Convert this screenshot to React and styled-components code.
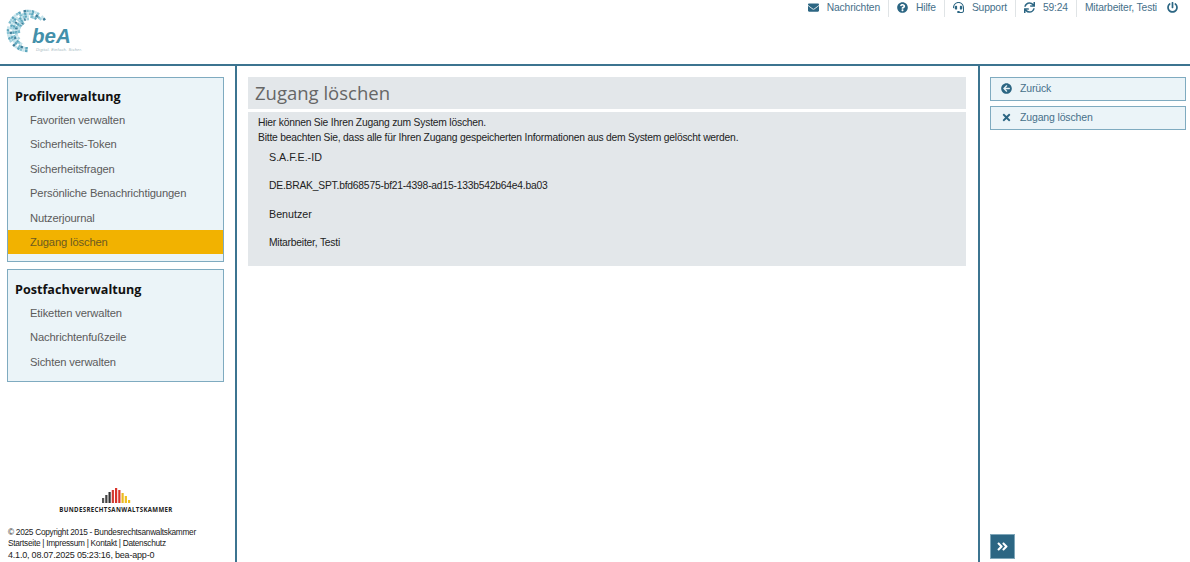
import React from 'react'
import styled, { createGlobalStyle } from 'styled-components'
import {
    FaEnvelope,
    FaQuestionCircle,
    FaHeadset,
    FaSync,
    FaPowerOff,
    FaArrowCircleLeft,
    FaTimes,
    FaAngleDoubleRight,
} from 'react-icons/fa'

const GlobalStyle = createGlobalStyle`
  html, body {
    margin: 0;
    padding: 0;
    height: 100%;
    background: #fff;
    font-family: "Liberation Sans", Arial, sans-serif;
    overflow: hidden;
  }
  #root { height: 100%; }
`

const profileLinks = [
    'Favoriten verwalten',
    'Sicherheits-Token',
    'Sicherheitsfragen',
    'Persönliche Benachrichtigungen',
    'Nutzerjournal',
    'Zugang löschen',
]
const mailboxLinks = ['Etiketten verwalten', 'Nachrichtenfußzeile', 'Sichten verwalten']

const bars = [
    { h: 5, c: '#555' },
    { h: 8, c: '#444' },
    { h: 11, c: '#333' },
    { h: 13, c: '#d23a30' },
    { h: 15, c: '#d9342b' },
    { h: 13, c: '#d9342b' },
    { h: 10, c: '#ecb920' },
    { h: 7, c: '#f0c020' },
    { h: 3, c: '#f0c020' },
]

// block ring of the logo: polar cells, thick on the left, thin towards both ends
const ringShades = ['#8cc6d6', '#5da7bd', '#c4e3eb', '#3f7f9a', '#7dbccd', '#a3d2df', '#5da7bd', '#c4e3eb']
const ringCells = []
const ringSteps = 30
for (let s = 0; s <= ringSteps; s++) {
    const t = s / ringSteps
    const deg = 36 + t * 237
    const rad = (deg * Math.PI) / 180
    const thickness = 2.5 + 9.5 * Math.sin(Math.PI * t)
    let row = 0
    for (let radius = 20; radius > 20 - thickness; radius -= 2.7) {
        row++
        // leave holes so the ring looks scattered like the original
        if ((s * 5 + row * 11) % 7 === 0) continue
        const pick = (s * 7 + row * 3) % ringShades.length
        ringCells.push({
            x: 28 + Math.cos(rad) * radius,
            y: 31 - Math.sin(rad) * radius,
            deg,
            color: ringShades[pick],
        })
    }
}

const Logo = () => (
    <LogoSvg viewBox="0 0 90 60" width="90" height="60">
        {ringCells.map((c, i) => (
            <rect
                key={i}
                x={c.x - 1.25}
                y={c.y - 1.25}
                width="2.5"
                height="2.5"
                fill={c.color}
                transform={`rotate(${-c.deg} ${c.x} ${c.y})`}
            />
        ))}
        <text x="32" y="42.5" fontFamily="'Liberation Sans', sans-serif" fontWeight="700" fontStyle="italic" fontSize="20.5" fill="#4390aa">
            beA
        </text>
        <text x="36" y="50.7" fontFamily="'Liberation Sans', sans-serif" fontStyle="italic" fontSize="4" letterSpacing="0.2" fill="#a3b8c0">
            Digital. Einfach. Sicher.
        </text>
    </LogoSvg>
)

const BrakLogo = () => (
    <Brak>
        <svg width="29" height="15" viewBox="0 0 29 15">
            {bars.map((b, i) => (
                <rect key={i} x={i * 3.25} y={15 - b.h} width="2.2" height={b.h} fill={b.c} />
            ))}
        </svg>
        <BrakName>Bundesrechtsanwaltskammer</BrakName>
    </Brak>
)

const App = () => (
    <Page>
        <GlobalStyle />
        <Header>
            <Logo />
            <TopNav>
                <TopItem><FaEnvelope size={11} /><span>Nachrichten</span></TopItem>
                <TopItem><FaQuestionCircle size={11} /><span>Hilfe</span></TopItem>
                <TopItem><FaHeadset size={11} /><span>Support</span></TopItem>
                <TopItem><FaSync size={11} /><span>59:24</span></TopItem>
                <TopItem $plain>
                    <span>Mitarbeiter, Testi</span>
                    <FaPowerOff size={11} />
                </TopItem>
            </TopNav>
        </Header>
        <Columns>
            <Left>
                <div>
                    <Panel $bottom={7}>
                        <PanelTitle>Profilverwaltung</PanelTitle>
                        {profileLinks.map((l) => (
                            <NavLink key={l} $active={l === 'Zugang löschen'}>{l}</NavLink>
                        ))}
                    </Panel>
                    <Panel>
                        <PanelTitle $tall>Postfachverwaltung</PanelTitle>
                        {mailboxLinks.map((l) => (
                            <NavLink key={l}>{l}</NavLink>
                        ))}
                    </Panel>
                </div>
                <Footer>
                    <BrakLogo />
                    <FootLine>© 2025 Copyright 2015 - Bundesrechtsanwaltskammer</FootLine>
                    <FootLine>Startseite | Impressum | Kontakt | Datenschutz</FootLine>
                    <Version>4.1.0, 08.07.2025 05:23:16, bea-app-0</Version>
                </Footer>
            </Left>
            <Main>
                <Title>Zugang löschen</Title>
                <Content>
                    <Intro>
                        Hier können Sie Ihren Zugang zum System löschen.
                        <br />
                        Bitte beachten Sie, dass alle für Ihren Zugang gespeicherten Informationen aus dem System gelöscht werden.
                    </Intro>
                    <Fields>
                        <FieldLabel>S.A.F.E.-ID</FieldLabel>
                        <FieldValue>DE.BRAK_SPT.bfd68575-bf21-4398-ad15-133b542b64e4.ba03</FieldValue>
                        <FieldLabel>Benutzer</FieldLabel>
                        <FieldValue>Mitarbeiter, Testi</FieldValue>
                    </Fields>
                </Content>
            </Main>
            <Right>
                <Actions>
                    <ActionButton><FaArrowCircleLeft size={11} /><span>Zurück</span></ActionButton>
                    <ActionButton><FaTimes size={11} /><span>Zugang löschen</span></ActionButton>
                </Actions>
                <ExpandButton><FaAngleDoubleRight size={13} /></ExpandButton>
            </Right>
        </Columns>
    </Page>
)

export default App

const Page = styled.div`
  height: 100vh;
  display: flex;
  flex-direction: column;
`

const Header = styled.header`
  height: 64px;
  flex: none;
  display: flex;
  justify-content: space-between;
  align-items: flex-start;
  border-bottom: 2px solid #3c7490;
`

const LogoSvg = styled.svg`
  display: block;
`

const TopNav = styled.nav`
  display: flex;
  margin-right: 12px;
`

const TopItem = styled.div`
  height: 17px;
  box-sizing: border-box;
  padding: 0 ${(p) => (p.$plain ? '0' : '8px')} 3px 8px;
  display: flex;
  align-items: center;
  gap: ${(p) => (p.$plain ? '10px' : '8px')};
  border-right: ${(p) => (p.$plain ? 'none' : '1px solid #e0e4e6')};
  font-size: 10.3px;
  letter-spacing: -0.15px;
  color: #46708a;
  svg { color: #2c6683; }
`

const Columns = styled.div`
  flex: 1;
  min-height: 0;
  display: flex;
`

const Left = styled.aside`
  width: 237px;
  flex: none;
  box-sizing: border-box;
  padding: 11px 11px 0 7px;
  display: flex;
  flex-direction: column;
  justify-content: space-between;
  border-right: 2px solid #3c7490;
`

const Panel = styled.section`
  margin-bottom: ${(p) => p.$bottom || 0}px;
  padding: 0 0 6.5px;
  background: #ebf4f8;
  border: 1px solid #7fabc0;
`

const PanelTitle = styled.h2`
  margin: 0;
  height: ${(p) => (p.$tall ? '31px' : '30px')};
  box-sizing: border-box;
  padding: ${(p) => (p.$tall ? '11px' : '10px')} 7px 0;
  font: 700 12.6px/18px "Open Sans", sans-serif;
  color: #111;
`

const NavLink = styled.a`
  display: block;
  height: 24.4px;
  line-height: 24.4px;
  padding-left: 22px;
  font-size: 11.2px;
  letter-spacing: -0.14px;
  color: ${(p) => (p.$active ? '#6b5a20' : '#5b5b5b')};
  background: ${(p) => (p.$active ? '#f2b200' : 'transparent')};
`

const Footer = styled.footer`
  padding: 0 0 1px 1px;
  color: #222;
`

const Brak = styled.div`
  display: flex;
  flex-direction: column;
  align-items: center;
  margin-bottom: 13px;
  svg { display: block; margin-bottom: 3px; }
`

const BrakName = styled.div`
  font: 700 6.1px/8px "Open Sans", sans-serif;
  letter-spacing: 0.35px;
  text-transform: uppercase;
  color: #222;
`

const FootLine = styled.div`
  font-size: 8.3px;
  letter-spacing: -0.28px;
  line-height: 11.5px;
`

const Version = styled.div`
  font-size: 9px;
  letter-spacing: -0.2px;
  line-height: 11.5px;
`

const Main = styled.main`
  flex: 1;
  min-width: 0;
  padding: 11px 12px 0 11px;
`

const Title = styled.h1`
  margin: 0 0 3px;
  height: 32px;
  padding-left: 7px;
  background: #e3e7ea;
  font: 400 18.5px/32px "Open Sans", sans-serif;
  color: #666;
`

const Content = styled.div`
  height: 154px;
  box-sizing: border-box;
  padding: 3px 10px 0;
  background: #e3e7ea;
  font-size: 10.3px;
  letter-spacing: -0.21px;
  color: #222;
`

const Intro = styled.p`
  margin: 0 0 2px;
  line-height: 15px;
`

const Fields = styled.div`
  display: grid;
  row-gap: 8.5px;
  padding-left: 11px;
`

const FieldLabel = styled.div`
  height: 20px;
  line-height: 20px;
  font-size: 10.7px;
  letter-spacing: 0;
`

const FieldValue = styled.div`
  height: 20px;
  line-height: 20px;
`

const Right = styled.aside`
  width: 212px;
  flex: none;
  padding: 11px 4px 3px 10px;
  box-sizing: border-box;
  display: flex;
  flex-direction: column;
  justify-content: space-between;
  border-left: 2px solid #3c7490;
`

const Actions = styled.div`
  display: flex;
  flex-direction: column;
  gap: 5px;
`

const ActionButton = styled.button`
  height: 24px;
  box-sizing: border-box;
  display: flex;
  align-items: center;
  gap: 8px;
  padding: 0 0 2px 10px;
  background: #ebf4f8;
  border: 1px solid #7fabc0;
  font: 400 10.5px "Liberation Sans", sans-serif;
  letter-spacing: -0.15px;
  color: #46708a;
  svg { color: #2c6683; }
`

const ExpandButton = styled.button`
  width: 25px;
  height: 25px;
  padding: 0;
  display: flex;
  align-items: center;
  justify-content: center;
  background: #2c6683;
  border: 1px solid #7ea6b9;
  color: #fff;
`
